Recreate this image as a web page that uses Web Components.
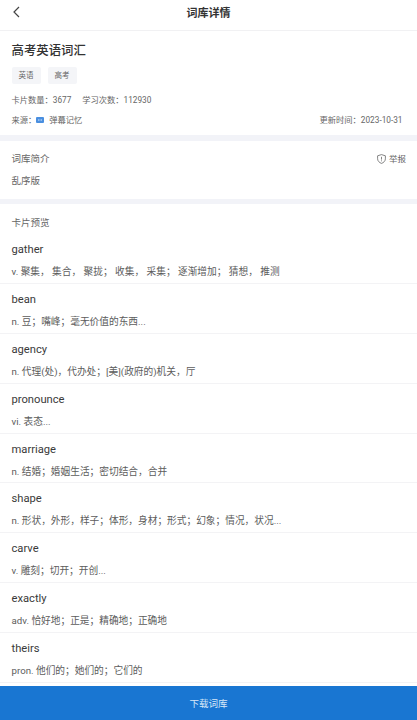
<!DOCTYPE html>
<html lang="zh">
<head>
<meta charset="utf-8">
<title>词库详情</title>
<style>
html, body { margin: 0; height: 100%; background: #fff; }
body { font-family: Roboto, "Noto Sans CJK SC", sans-serif; overflow: hidden; }
deck-page { height: 720px; }
</style>
</head>
<body>
<deck-page>
  <nav-bar slot="top">词库详情</nav-bar>
  <deck-info title-text="高考英语词汇" tags="英语,高考" cards="3677" studies="112930" source="弹幕记忆" updated="2023-10-31"></deck-info>
  <deck-intro text="乱序版"></deck-intro>
  <card-preview>
    <word-row word="gather" def="v. 聚集， 集合， 聚拢； 收集， 采集； 逐渐增加； 猜想， 推测"></word-row>
    <word-row word="bean" def="n. 豆；嘴峰；毫无价值的东西..."></word-row>
    <word-row word="agency" def="n. 代理(处)，代办处；[美](政府的)机关，厅"></word-row>
    <word-row word="pronounce" def="vi. 表态..."></word-row>
    <word-row word="marriage" def="n. 结婚；婚姻生活；密切结合，合并"></word-row>
    <word-row word="shape" def="n. 形状，外形，样子；体形，身材；形式；幻象；情况，状况..."></word-row>
    <word-row word="carve" def="v. 雕刻；切开；开创..."></word-row>
    <word-row word="exactly" def="adv. 恰好地；正是；精确地；正确地"></word-row>
    <word-row word="theirs" def="pron. 他们的；她们的；它们的"></word-row>
  </card-preview>
  <download-bar slot="bottom">下载词库</download-bar>
</deck-page>
<script>
"use strict";

const define = (name, css, html) => {
    customElements.define(name, class extends HTMLElement {
        constructor() {
            super();
            this.attachShadow({ mode: 'open' });
        }
        connectedCallback() {
            this.shadowRoot.innerHTML = `<style>${css}</style>${html(this)}`;
        }
    });
};

define('deck-page', `
:host { display: flex; flex-direction: column; height: 720px; color: #333; }
.body { flex: 1; min-height: 0; overflow: hidden; }
`, () => `<slot name="top"></slot><div class="body"><slot></slot></div><slot name="bottom"></slot>`);

define('nav-bar', `
:host { display: block; height: 31px; box-sizing: border-box; border-bottom: 1px solid #f1f1f3; position: relative; }
.row { display: flex; height: 24px; align-items: center; justify-content: center; font-size: 11px; font-weight: 700; color: #333; }
svg { position: absolute; left: 12px; top: 5px; }
`, () => `<svg width="10" height="14" viewBox="0 0 10 14" fill="none" stroke="#444" stroke-width="1.2"><path d="M7 2 2 7l5 5"/></svg><div class="row"><slot></slot></div>`);

define('deck-info', `
:host { display: block; height: 110px; padding: 0 11.5px; box-sizing: border-box; border-bottom: 6px solid #f2f3f8; font-size: 8.25px; color: #666; }
h1 { margin: 0; padding-top: 11px; font-size: 12.4px; line-height: 18px; font-weight: 500; color: #333; }
.tags { display: flex; gap: 7px; margin-top: 7px; }
.tags span { width: 29px; height: 17px; line-height: 17px; text-align: center; background: #f4f5f8; border-radius: 2px; font-size: 7.5px; color: #666; }
.stats { margin-top: 10px; line-height: 12px; display: flex; gap: 11px; }
.src { margin-top: 8px; line-height: 12px; display: flex; align-items: center; }
.src svg { margin: 0 5px 0 0; }
.src .up { margin-left: auto; margin-right: 3px; }
`, (el) => {
    const a = (n) => el.getAttribute(n);
    return `<h1>${a('title-text')}</h1>
<div class="tags">${a('tags').split(',').map((t) => `<span>${t}</span>`).join('')}</div>
<div class="stats"><span>卡片数量：${a('cards')}</span><span>学习次数：${a('studies')}</span></div>
<div class="src"><span>来源：</span><svg width="8" height="6" viewBox="0 0 8 6"><rect width="8" height="6" rx="1" fill="#4a8fe0"/><path d="M2 3h1.5M4.5 3H6" stroke="#fff" stroke-width=".8"/></svg><span>${a('source')}</span><span class="up">更新时间：${a('updated')}</span></div>`;
});

define('deck-intro', `
:host { display: block; height: 63px; padding: 0 11.5px; box-sizing: border-box; border-bottom: 5px solid #f2f3f8; font-size: 9.5px; color: #666; }
.head { display: flex; justify-content: space-between; align-items: center; padding-top: 11px; line-height: 14px; }
.rep { display: flex; align-items: center; gap: 3px; font-size: 8.5px; margin-right: -0.5px; }
.txt { margin-top: 8px; line-height: 14px; }
`, (el) => `<div class="head"><span>词库简介</span><span class="rep"><svg width="9" height="10" viewBox="0 0 9 10" fill="none" stroke="#666" stroke-width=".8"><path d="M4.5.6 8.4 1.8v3C8.4 7 6.6 8.7 4.5 9.4 2.4 8.7.6 7 .6 4.8v-3z"/><path d="M4.5 2.8v2.8M4.5 6.4v.9"/></svg>举报</span></div><div class="txt">${el.getAttribute('text')}</div>`);

define('card-preview', `
:host { display: block; }
.head { box-sizing: border-box; height: 30px; padding: 12px 11.5px 0; font-size: 9.5px; line-height: 14px; color: #666; }
`, () => `<div class="head">卡片预览</div><slot></slot>`);

define('word-row', `
:host { display: block; height: 49.875px; padding: 8px 11.5px 0; box-sizing: border-box; border-bottom: 1px solid #f3f3f5; }
.w { font-size: 11.2px; line-height: 16px; color: #3a3a3a; }
.d { margin-top: 7px; font-size: 9.7px; line-height: 14px; color: #5c5c5c; white-space: nowrap; }
`, (el) => `<div class="w">${el.getAttribute('word')}</div><div class="d">${el.getAttribute('def')}</div>`);

define('download-bar', `
:host { display: flex; height: 34px; align-items: center; justify-content: center; background: #1976d2; color: #d8e8f8; font-size: 9.5px; flex: none; }
`, () => `<slot></slot>`);
</script>
</body>
</html>
